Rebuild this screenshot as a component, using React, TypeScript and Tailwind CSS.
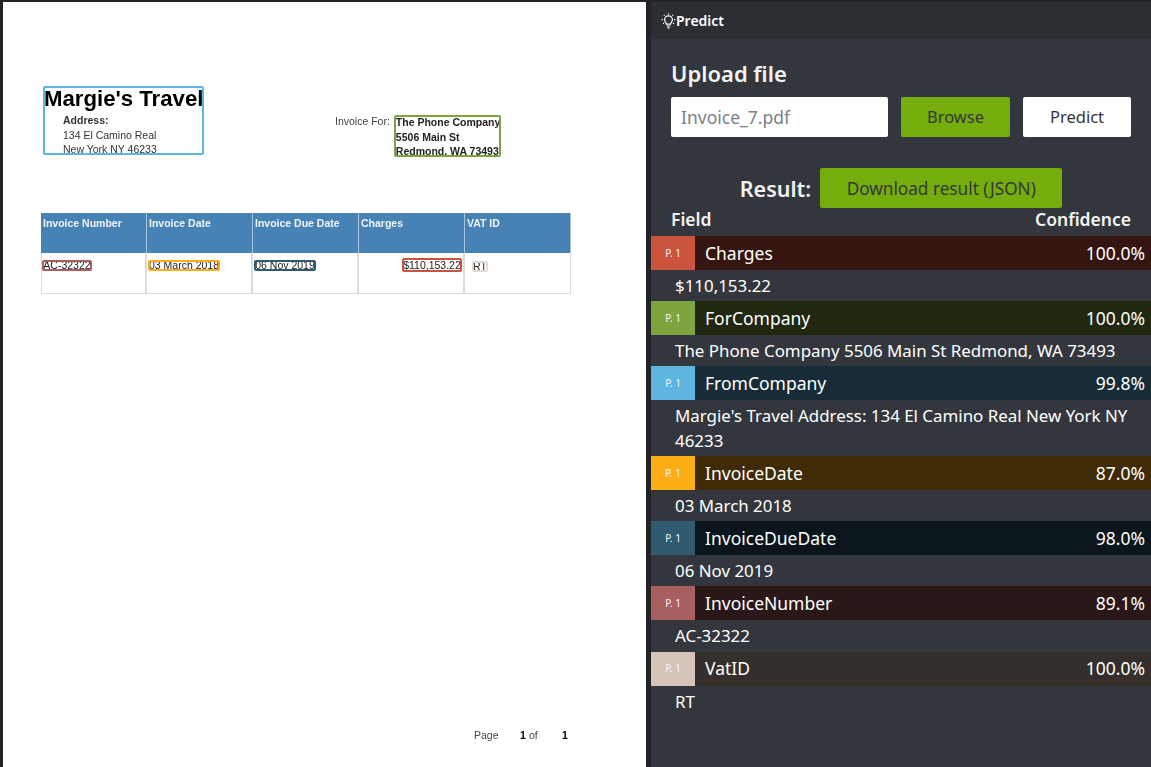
import { ReactNode } from 'react';

const fields = [
  { name: 'Charges', conf: '100.0%', value: '$110,153.22', chip: 'bg-[#cb553c]', row: 'bg-[#35150f]' },
  { name: 'ForCompany', conf: '100.0%', value: 'The Phone Company 5506 Main St Redmond, WA 73493', chip: 'bg-[#7ea440]', row: 'bg-[#20280f]' },
  { name: 'FromCompany', conf: '99.8%', value: "Margie's Travel Address: 134 El Camino Real New York NY 46233", chip: 'bg-[#5eb5e0]', row: 'bg-[#172c38]' },
  { name: 'InvoiceDate', conf: '87.0%', value: '03 March 2018', chip: 'bg-[#fdae17]', row: 'bg-[#3f2b06]' },
  { name: 'InvoiceDueDate', conf: '98.0%', value: '06 Nov 2019', chip: 'bg-[#2f5a70]', row: 'bg-[#0b161c]' },
  { name: 'InvoiceNumber', conf: '89.1%', value: 'AC-32322', chip: 'bg-[#a85f60]', row: 'bg-[#2a1718]' },
  { name: 'VatID', conf: '100.0%', value: 'RT', chip: 'bg-[#d6c4ba]', row: 'bg-[#352f2c]' },
];

// border drawn over the document text, like the model's field boxes
function Overlay({ color }: { color: string }) {
  return <span className={`absolute inset-0 border-[2.5px] rounded-[2px] ${color}`} />;
}

function Highlight({ color, width, tall, children }: { color: string; width: string; tall?: boolean; children: ReactNode }) {
  return (
    <span className={`relative inline-block text-center text-[10.5px] text-[#222] whitespace-nowrap ${tall ? 'h-[14px] leading-[14px]' : 'h-[11px] leading-[11px]'} ${width}`}>
      {children}
      <Overlay color={color} />
    </span>
  );
}

function Cell({ children, last, first }: { children?: ReactNode; last?: boolean; first?: boolean }) {
  return (
    <div className={`h-[41px] px-[1px] pt-[5px] border-b border-[#dcdcdc] ${last ? 'border-r' : 'border-r-2'} ${first ? 'border-l pl-0' : ''}`}>
      {children}
    </div>
  );
}

function InvoicePage() {
  return (
    <div className="flex-1 min-w-0 bg-white border-l-[3px] border-[#212326] overflow-hidden">
      <div className="h-full pl-[38px] pr-[75px] pt-[84px] text-[#333] font-['Liberation_Sans',sans-serif] flex flex-col blur-[0.6px]">
        <div className="flex items-start h-[127px]">
          <div className="relative w-[161px] h-[69px] ml-[2px] pt-[1px]">
            <div className="text-[22.2px] leading-[23px] font-bold text-black whitespace-nowrap ml-[1px]">Margie's Travel</div>
            <div className="pl-[20px] text-[10.5px] leading-[14.5px] pt-[3px]">
              <div className="font-bold">Address:</div>
              <div>134 El Camino Real</div>
              <div>New York NY 46233</div>
            </div>
            <Overlay color="border-[#5eb5e0]" />
          </div>
          <div className="ml-[131px] mt-[28px] text-[10.5px] leading-[14px] text-[#444]">Invoice For:</div>
          <div className="relative ml-[4px] mt-[29px] w-[107px] h-[42px] pl-[2px] text-[10.5px] leading-[14.5px] font-bold text-[#222] whitespace-nowrap">
            <div>The Phone Company</div>
            <div>5506 Main St</div>
            <div>Redmond, WA 73493</div>
            <Overlay color="border-[#7ea440]" />
          </div>
        </div>
        <div className="w-[530px] grid grid-cols-[106px_106px_106px_106px_106px] text-[10.5px]">
          {['Invoice Number', 'Invoice Date', 'Invoice Due Date', 'Charges', 'VAT ID'].map((h) => (
            <div key={h} className="h-[40px] bg-[#4682b4] text-[#f0f4f8] font-bold px-[2px] pt-[4px] leading-[13px] border-r border-[#a9c3da]">
              {h}
            </div>
          ))}
          <Cell first><Highlight color="border-[#a85f60]" width="w-[50px]">AC-32322</Highlight></Cell>
          <Cell><Highlight color="border-[#fdae17]" width="w-[72px]">03 March 2018</Highlight></Cell>
          <Cell><Highlight color="border-[#2f5a70]" width="w-[62px]">06 Nov 2019</Highlight></Cell>
          <Cell>
            <div className="text-right">
              <Highlight tall color="border-[#cb553c]" width="w-[60px]">$110,153.22</Highlight>
            </div>
          </Cell>
          <Cell last>
            <div className="pl-[6px] pt-[1px]">
              <Highlight color="border-[#e6d8d0]" width="w-[16px]">RT</Highlight>
            </div>
          </Cell>
        </div>
        <div className="mt-auto mb-[25px] flex justify-end pr-[3px] text-[10.5px] leading-[13px] text-[#444]">
          <span className="w-[46px]">Page</span>
          <span className="font-bold text-black w-[9px]">1</span>
          <span className="w-[33px]">of</span>
          <span className="font-bold text-black w-[6px]">1</span>
        </div>
      </div>
    </div>
  );
}

function BulbIcon() {
  return (
    <svg width="15" height="16" viewBox="0 0 15 16" fill="none" stroke="#fff" strokeWidth="1.2" className="shrink-0">
      <path d="M5.4 11.2c0-1.5-1.8-2.2-1.8-4.5a3.9 3.9 0 0 1 7.8 0c0 2.3-1.8 3-1.8 4.5z" />
      <path d="M5.6 13h3.8M6.4 14.8h2.2" />
      <path d="M7.5.2v1.3M2.8 1.8l.9.9M12.2 1.8l-.9.9M.6 6.6h1.3M13.1 6.6h1.3M2 10.8l1-.8M13 10.8l-1-.8" />
    </svg>
  );
}

export default function App() {
  return (
    <div className="w-[1151px] h-[767px] overflow-hidden flex border-t-2 border-[#212326] bg-[#212326] font-['Noto_Sans',sans-serif]">
      <InvoicePage />
      <div className="w-[500px] ml-[5px] shrink-0 bg-[#33373d] text-white flex flex-col">
        <div className="h-[37px] bg-[#2b2e33] flex items-center pl-[10px] text-[14px] font-semibold">
          <BulbIcon />
          <span>Predict</span>
        </div>
        <div className="px-[20px] pt-[18px]">
          <h2 className="text-[22px] leading-[32px] font-semibold text-[#f2f2f2]">Upload file</h2>
          <div className="flex mt-[8px] gap-[13px]">
            <div className="w-[217px] h-[40px] bg-white rounded-[2px] text-[#7a8088] text-[17.5px] leading-[40px] pl-[10px]">Invoice_7.pdf</div>
            <button className="w-[109px] h-[40px] bg-[#75ad0c] rounded-[2px] text-[#33373d] text-[16.5px]">Browse</button>
            <button className="w-[108px] h-[40px] bg-white rounded-[2px] text-[#33373d] text-[16.5px]">Predict</button>
          </div>
          <div className="flex items-center justify-center gap-[9px] mt-[31px] pl-[3px] -ml-[3px]">
            <span className="text-[21.5px] font-semibold text-[#f2f2f2] translate-y-[1px]">Result:</span>
            <button className="w-[242px] h-[40px] bg-[#75ad0c] rounded-[2px] text-[#33373d] text-[17.2px] pt-[1px]">Download result (JSON)</button>
          </div>
          <div className="flex justify-between h-[28px] items-center pb-[5px] text-[17.5px] font-semibold text-[#f2f2f2]">
            <span>Field</span>
            <span>Confidence</span>
          </div>
        </div>
        {fields.map((f) => (
          <div key={f.name}>
            <div className={`flex items-center h-[34px] ${f.row}`}>
              <div className={`w-[44px] h-full flex items-center justify-center text-[10px] text-[#f5f5f5] ${f.chip}`}>P. 1</div>
              <span className="ml-[10px] text-[17.5px]">{f.name}</span>
              <span className="ml-auto mr-[6px] text-[17.5px]">{f.conf}</span>
            </div>
            <div className="pl-[24px] pr-[20px] pt-[3px] pb-[3.1px] text-[16.9px] leading-[25px]">{f.value}</div>
          </div>
        ))}
      </div>
    </div>
  );
}
